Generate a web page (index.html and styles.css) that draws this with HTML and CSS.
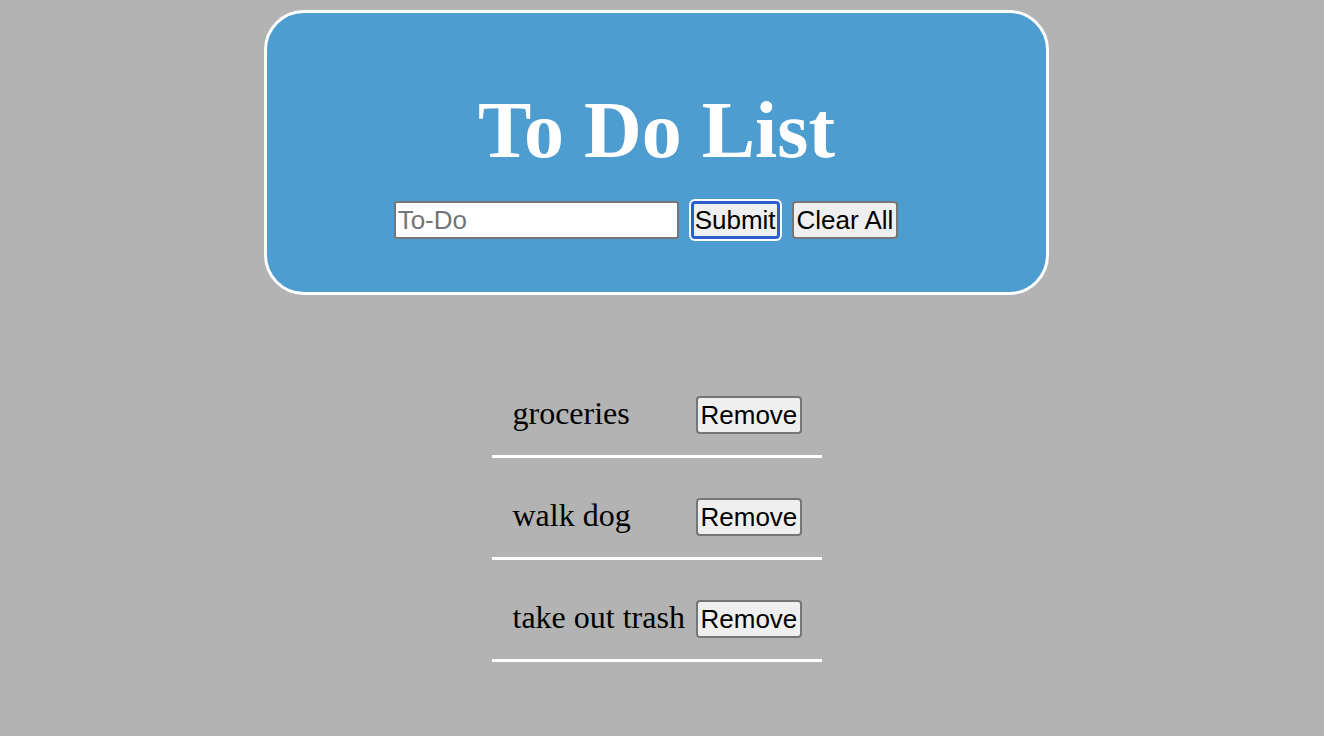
FILE: index.html
```html
<!DOCTYPE html>
<html>
<head>
<meta charset="utf-8">
<title>To Do List</title>
<link rel="stylesheet" href="styles.css">
</head>
<body>
<div class="page">
  <header class="panel">
    <h1 class="title">To Do List</h1>
    <form class="entry">
      <input class="field" type="text" placeholder="To-Do">
      <button class="btn btn-submit" type="button">Submit</button>
      <button class="btn" type="button">Clear All</button>
    </form>
  </header>
  <ul class="todos">
    <li class="todo"><span class="todo-text">groceries</span><button class="btn" type="button">Remove</button></li>
    <li class="todo"><span class="todo-text">walk dog</span><button class="btn" type="button">Remove</button></li>
    <li class="todo"><span class="todo-text">take out trash</span><button class="btn" type="button">Remove</button></li>
  </ul>
</div>
</body>
</html>
```
FILE: styles.css
```css
html, body {
  margin: 0;
  padding: 0;
}
body {
  background: #b3b3b3;
  font-family: "Liberation Serif", "Times New Roman", serif;
  padding: 10px 19px 0 8px;
}
.page {
  display: flex;
  flex-direction: column;
  align-items: center;
}
.panel {
  box-sizing: border-box;
  width: 785px;
  height: 285px;
  background: #4d9dd0;
  border: 3px solid #ffffff;
  border-radius: 40px;
  padding-top: 71px;
  display: flex;
  flex-direction: column;
  align-items: center;
}
.title {
  margin: 0;
  color: #ffffff;
  font-size: 80px;
  font-weight: bold;
  line-height: 92px;
  text-align: center;
}
.entry {
  margin: 25px 0 0 0;
  padding-right: 21px;
  display: flex;
  align-items: center;
  gap: 12px;
}
.field {
  box-sizing: border-box;
  width: 285px;
  height: 38px;
  margin: 0;
  padding: 0 2px;
  border: 2px solid #767676;
  border-radius: 3px;
  background: #ffffff;
  font-family: "Liberation Sans", Arial, sans-serif;
  font-size: 26px;
  color: #000;
}
.field::placeholder {
  color: #757575;
}
.btn {
  box-sizing: border-box;
  height: 38px;
  margin: 0;
  padding: 0 3px;
  border: 2px solid #767676;
  border-radius: 4px;
  background: #efefef;
  color: #000;
  font-family: "Liberation Sans", Arial, sans-serif;
  font-size: 26px;
  line-height: 34px;
}
.btn-submit {
  padding: 0 1px;
  border: 3px solid #2b5fcc;
  border-radius: 4px;
  line-height: 32px;
  box-shadow: 0 0 0 2px #ffffff;
}
.todos {
  list-style: none;
  margin: 61px 0 0 0;
  padding: 0;
  width: 330px;
}
.todo {
  display: flex;
  align-items: baseline;
  padding: 39px 21px 21px 21px;
  border-bottom: 3px solid #ffffff;
}
.todo-text {
  width: 183px;
  flex: none;
  font-size: 32px;
  color: #000;
}
```
